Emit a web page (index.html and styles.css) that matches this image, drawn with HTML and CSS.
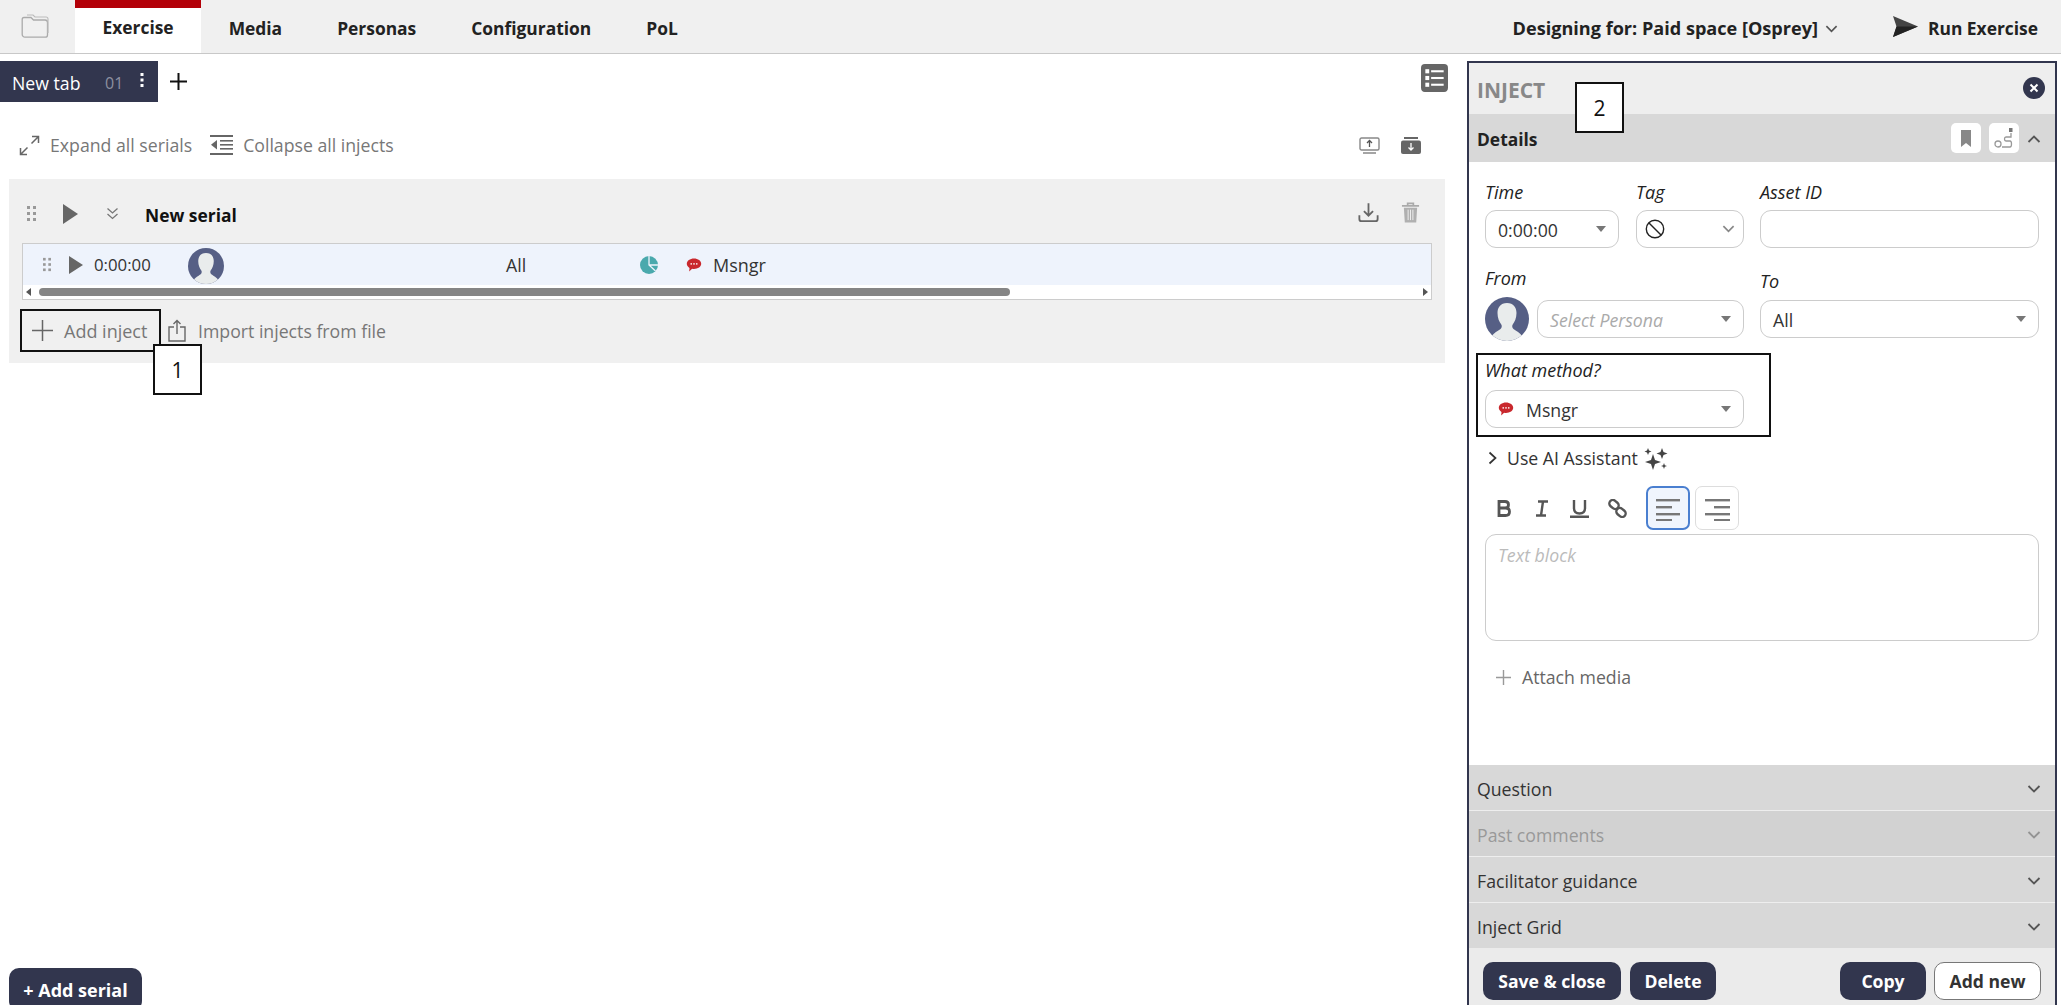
FILE: index.html
```html
<!DOCTYPE html>
<html lang="en">
<head>
<meta charset="utf-8">
<title>Exercise designer</title>
<link rel="stylesheet" href="styles.css">
</head>
<body>
<svg class="defs" width="0" height="0" aria-hidden="true">
  <symbol id="avatar" viewBox="0 0 44 44">
    <clipPath id="avc"><circle cx="22" cy="22" r="22"/></clipPath>
    <g clip-path="url(#avc)">
      <rect width="44" height="44" fill="#565f85"/>
      <path d="M22 6c-6.500 0-9.500 4.500-9.500 10 0 5 1.800 9 3.800 11.500.8 1.200.6 3.500-.8 4.600C12 35 6 36.500 6 44h32c0-7.500-6-9-9.500-11.900-1.400-1.100-1.600-3.400-.8-4.600 2-2.500 3.800-6.500 3.800-11.500C31.500 10.500 28.500 6 22 6z" fill="#e9ecec"/>
    </g>
  </symbol>
  <symbol id="msg" viewBox="0 0 16 16">
    <path d="M8 1.500c4 0 7.200 2.300 7.200 5.300S12 12 8 12c-.7 0-1.300 0-1.900-.2L3.200 14.500l.3-3.500C1.800 10 .8 8.500.8 6.800.8 3.800 4 1.500 8 1.500z" fill="#c9282d"/>
    <circle cx="5.200" cy="6.900" r=".8" fill="#fff"/><circle cx="8" cy="6.900" r=".8" fill="#fff"/><circle cx="10.800" cy="6.900" r=".8" fill="#fff"/>
  </symbol>
  <symbol id="dots" viewBox="0 0 11 17">
    <g fill="#999"><rect x="1" y="1" width="3" height="3"/><rect x="7" y="1" width="3" height="3"/><rect x="1" y="7" width="3" height="3"/><rect x="7" y="7" width="3" height="3"/><rect x="1" y="13" width="3" height="3"/><rect x="7" y="13" width="3" height="3"/></g>
  </symbol>
  <symbol id="chev" viewBox="0 0 14 8">
    <path d="M1.500 1l5.500 5.500L12.500 1" fill="none" stroke="#555" stroke-width="1.800"/>
  </symbol>
</svg>

<header class="topbar">
  <div class="folder">
    <svg width="28" height="24" viewBox="0 0 28 24"><path d="M3 3.500h7l2.500 2.500H24c1.500 0 2.500 1 2.500 2.500V21c0 1.200-1 2.200-2.200 2.200H4c-1.500 0-2.800-1.200-2.800-2.800V5.500C1.200 4.400 2 3.500 3 3.500z" fill="none" stroke="#aaa" stroke-width="1.300"/><path d="M6 1h6l2 2h11c1 0 2 .8 2 2v14" fill="none" stroke="#bbb" stroke-width="1.100"/></svg>
  </div>
  <nav class="nav">
    <a class="nav-item active">Exercise</a>
    <a class="nav-item">Media</a>
    <a class="nav-item">Personas</a>
    <a class="nav-item">Configuration</a>
    <a class="nav-item">PoL</a>
  </nav>
  <div class="top-right">
    <span class="designing">Designing for: Paid space [Osprey]</span>
    <svg class="designing-chev" width="13" height="8"><use href="#chev"/></svg>
    <svg class="send" width="25" height="21" viewBox="0 0 25 21"><path d="M0 0l25 10.500L0 21l3.500-10.500z" fill="#444"/><path d="M3.500 10.500L25 10.500 0 21z" fill="#222"/></svg>
    <span class="run">Run Exercise</span>
  </div>
</header>

<main class="main">
  <section class="left">
    <div class="tabbar">
      <div class="tab">
        <span class="tab-name">New tab</span>
        <span class="tab-num">01</span>
        <svg class="tab-kebab" width="4" height="16" viewBox="0 0 4 16"><g fill="#fff"><rect x="0.500" y="1" width="3" height="3"/><rect x="0.500" y="6.500" width="3" height="3"/><rect x="0.500" y="12" width="3" height="3"/></g></svg>
      </div>
      <svg class="tab-plus" width="17" height="17" viewBox="0 0 17 17"><path d="M8.500 0v17M0 8.500h17" stroke="#111" stroke-width="2"/></svg>
      <svg class="list-icon" width="27" height="28" viewBox="0 0 28 27" preserveAspectRatio="none"><rect width="28" height="27" rx="4" fill="#666"/><g fill="#fff"><rect x="4.500" y="5" width="4" height="4"/><rect x="4.500" y="11.500" width="4" height="4"/><rect x="4.500" y="18" width="4" height="4"/><rect x="10.500" y="6" width="13" height="2"/><rect x="10.500" y="12.500" width="13" height="2"/><rect x="10.500" y="19" width="13" height="2"/></g></svg>
    </div>

    <div class="tools">
      <span class="tool">
        <svg width="21" height="21" viewBox="0 0 21 21"><path d="M13 1.500h6.500V8M19.500 1.500L12.500 8.500M8 19.500H1.500V13M1.500 19.500l7-7" fill="none" stroke="#666" stroke-width="1.500"/></svg>
        <span>Expand all serials</span>
      </span>
      <span class="tool">
        <svg width="23" height="20" viewBox="0 0 23 20"><g fill="#666"><rect y="0" width="23" height="2"/><rect x="10" y="5" width="13" height="1.600"/><rect x="10" y="9" width="13" height="1.600"/><rect x="10" y="13" width="13" height="1.600"/><rect y="18" width="23" height="2"/><path d="M7 5v9.500L1 9.800z"/></g></svg>
        <span>Collapse all injects</span>
      </span>
      <span class="tools-right">
        <svg width="21" height="17" viewBox="0 0 21 17"><path d="M2.500 1h16c.8 0 1.500.7 1.500 1.500v9c0 .8-.7 1.500-1.500 1.500h-16C1.700 13 1 12.300 1 11.500v-9C1 1.700 1.700 1 2.500 1zM4 16h13" fill="none" stroke="#888" stroke-width="1.400"/><path d="M10.500 10V4M8 6l2.500-2.500L13 6" fill="none" stroke="#555" stroke-width="1.300"/></svg>
        <svg width="20" height="17" viewBox="0 0 20 17"><path d="M3 0h14v2H3z" fill="#666"/><rect y="3.500" width="20" height="13.500" rx="2" fill="#666"/><path d="M10 6v7M7.500 10.500L10 13l2.500-2.500" fill="none" stroke="#fff" stroke-width="1.300"/></svg>
      </span>
    </div>

    <div class="card">
      <div class="serial-head">
        <svg class="serial-dots" width="11" height="17"><use href="#dots"/></svg>
        <span class="tri tri-lg"></span>
        <svg class="dbl" width="13" height="13" viewBox="0 0 13 13"><path d="M1.500 1.500l5 4.500 5-4.500M1.500 7l5 4.500 5-4.500" fill="none" stroke="#777" stroke-width="1.300"/></svg>
        <b class="serial-name">New serial</b>
        <span class="serial-icons">
          <svg width="21" height="21" viewBox="0 0 23 22"><path d="M11.500 1v13M6.500 9.500l5 5 5-5M1.500 14v4c0 1.500 1 2.500 2.500 2.500h15c1.500 0 2.500-1 2.500-2.500v-4" fill="none" stroke="#666" stroke-width="2"/></svg>
          <svg width="19" height="21" viewBox="0 0 20 22"><path d="M1 4h18M7 4V1.500h6V4" fill="none" stroke="#aaa" stroke-width="1.800"/><path d="M3 6h14l-1 15.500H4z" fill="#b0b0b0"/><path d="M7.500 8v11M10 8v11M12.500 8v11" stroke="#f0f0f0" stroke-width="1"/></svg>
        </span>
      </div>

      <div class="inject-table">
        <div class="inject-row">
          <svg class="row-dots" width="10" height="15"><use href="#dots"/></svg>
          <span class="tri tri-sm"></span>
          <span class="cell-time">0:00:00</span>
          <svg class="cell-avatar" width="36" height="36"><use href="#avatar"/></svg>
          <span class="cell-to">All</span>
          <svg class="cell-pie" width="18" height="18" viewBox="0 0 18 18"><circle cx="9" cy="9" r="9" fill="#4aa9ad"/><path d="M9 0v9l6.500 6M9 9h9" fill="none" stroke="#eef3fc" stroke-width="1.300"/></svg>
          <svg class="cell-msg" width="16" height="16"><use href="#msg"/></svg>
          <span class="cell-method">Msngr</span>
        </div>
        <div class="scrollbar">
          <span class="arrow-left"></span>
          <span class="thumb"></span>
          <span class="arrow-right"></span>
        </div>
      </div>

      <div class="card-actions">
        <span class="add-inject">
          <svg width="21" height="21" viewBox="0 0 21 21"><path d="M10.500 0v21M0 10.500h21" stroke="#666" stroke-width="1.500"/></svg>
          <span>Add inject</span>
        </span>
        <span class="import">
          <svg width="18" height="23" viewBox="0 0 18 23"><path d="M6 8H1v14h16V8h-5M9 15V1.500M5.500 5L9 1.500 12.500 5" fill="none" stroke="#666" stroke-width="1.400"/></svg>
          <span>Import injects from file</span>
        </span>
      </div>
      <div class="callout callout-one">1</div>
    </div>

    <button class="add-serial">+ Add serial</button>
  </section>

  <aside class="panel">
    <div class="panel-head">
      <span class="panel-title">INJECT</span>
      <svg class="panel-close" width="22" height="22" viewBox="0 0 22 22"><circle cx="11" cy="11" r="11" fill="#32364e"/><path d="M7.500 7.500l7 7M14.500 7.500l-7 7" stroke="#fff" stroke-width="2"/></svg>
      <div class="callout callout-two">2</div>
    </div>
    <div class="section-head details">
      <b>Details</b>
      <span class="details-icons">
        <span class="white-btn">
          <svg width="12" height="17" viewBox="0 0 12 17"><path d="M1 0h10v17l-5-4-5 4z" fill="#888"/></svg>
        </span>
        <span class="white-btn">
          <svg width="21" height="22" viewBox="0 0 21 22"><circle cx="4" cy="17" r="3" fill="none" stroke="#999" stroke-width="1.300"/><rect x="15" y="1" width="3.500" height="4" fill="#777"/><path d="M17 6v4h-5c-2 0-2 4 0 4h4c2 0 2 6 0 6H8" fill="none" stroke="#999" stroke-width="1.300"/></svg>
        </span>
      </span>
      <svg class="chev-up" width="14" height="8"><use href="#chev"/></svg>
    </div>

    <div class="panel-body">
      <div class="row row-one">
        <div class="field field-time">
          <label class="lbl">Time</label>
          <div class="ctl"><span>0:00:00</span><i class="caret"></i></div>
        </div>
        <div class="field field-tag">
          <label class="lbl">Tag</label>
          <div class="ctl">
            <svg width="20" height="20" viewBox="0 0 20 20"><circle cx="10" cy="10" r="8.700" fill="none" stroke="#222" stroke-width="1.400"/><path d="M4 4l12 12" stroke="#222" stroke-width="1.400"/></svg>
            <svg class="ctl-chev" width="13" height="8"><use href="#chev"/></svg>
          </div>
        </div>
        <div class="field field-asset">
          <label class="lbl">Asset ID</label>
          <div class="ctl"></div>
        </div>
      </div>

      <div class="row row-two">
        <div class="field field-from">
          <label class="lbl">From</label>
          <div class="from-line">
            <svg width="44" height="44"><use href="#avatar"/></svg>
            <div class="ctl ctl-grow"><em>Select Persona</em><i class="caret"></i></div>
          </div>
        </div>
        <div class="field field-to">
          <label class="lbl">To</label>
          <div class="ctl"><span>All</span><i class="caret"></i></div>
        </div>
      </div>

      <div class="method">
        <label class="lbl">What method?</label>
        <div class="ctl ctl-method">
          <svg width="16" height="16"><use href="#msg"/></svg>
          <span>Msngr</span>
          <i class="caret"></i>
        </div>
      </div>

      <div class="ai">
        <svg width="9" height="14" viewBox="0 0 9 14"><path d="M1.500 1.500l6 5.500-6 5.500" fill="none" stroke="#333" stroke-width="1.700"/></svg>
        <span>Use AI Assistant</span>
        <svg width="24" height="23" viewBox="0 0 24 23"><g fill="#444"><path d="M9 7l2 6 6 2-6 2-2 6-2-6-6-2 6-2z"/><path d="M18 1l1.500 4 4 1.500-4 1.500L18 12l-1.500-4-4-1.500 4-1.500z"/><path d="M4 1l1 2.500L7.500 4.500 5 5.500 4 8 3 5.500.5 4.500 3 3.500z"/><path d="M20 16l.8 2.200L23 19l-2.200.8L20 22l-.8-2.200L17 19l2.200-.8z"/></g></svg>
      </div>

      <div class="rte">
        <svg class="rte-b" width="14" height="17" viewBox="0 0 14 17"><path d="M2 1.500h6c2.200 0 3.500 1.200 3.500 3.200S10.200 8 8 8H2zM2 8h6.500c2.500 0 4 1.300 4 3.700S11 15.500 8.500 15.500H2z" fill="none" stroke="#555" stroke-width="2.800"/></svg>
        <svg class="rte-i" width="14" height="17" viewBox="0 0 14 17"><path d="M3 1.500h10M1 15.500h10M8 1.500L6 15.500" fill="none" stroke="#555" stroke-width="2.400"/></svg>
        <svg class="rte-u" width="19" height="19" viewBox="0 0 19 19"><path d="M4 1v8c0 3.500 2 5.500 5.500 5.500S15 12.500 15 9V1" fill="none" stroke="#555" stroke-width="2.400"/><path d="M0 17.800h19" stroke="#555" stroke-width="2.600"/></svg>
        <svg class="rte-l" width="19" height="19" viewBox="0 0 19 19"><g fill="none" stroke="#555" stroke-width="2.400"><rect x="1" y="2" width="10" height="7" rx="3.500" transform="rotate(40 6 5.500)"/><rect x="8" y="10" width="10" height="7" rx="3.500" transform="rotate(40 13 13.500)"/></g></svg>
        <span class="align-btn active">
          <svg width="25" height="25" viewBox="0 0 25 25"><g fill="#777"><rect y="3" width="24" height="2.400"/><rect y="10" width="16" height="2.400"/><rect y="17" width="24" height="2.400"/><rect y="23" width="16" height="2"/></g></svg>
        </span>
        <span class="align-btn">
          <svg width="25" height="25" viewBox="0 0 25 25"><g fill="#777"><rect y="3" width="25" height="2.400"/><rect x="9" y="10" width="16" height="2.400"/><rect y="17" width="25" height="2.400"/><rect x="9" y="23" width="16" height="2"/></g></svg>
        </span>
      </div>

      <div class="textblock"><em>Text block</em></div>

      <div class="attach">
        <svg width="15" height="15" viewBox="0 0 15 15"><path d="M7.500 0v15M0 7.500h15" stroke="#999" stroke-width="1.400"/></svg>
        <span>Attach media</span>
      </div>
    </div>

    <div class="accordion">
      <div class="section-head"><span>Question</span><svg width="14" height="8"><use href="#chev"/></svg></div>
      <div class="section-head muted"><span>Past comments</span><svg width="14" height="8"><use href="#chev"/></svg></div>
      <div class="section-head"><span>Facilitator guidance</span><svg width="14" height="8"><use href="#chev"/></svg></div>
      <div class="section-head"><span>Inject Grid</span><svg width="14" height="8"><use href="#chev"/></svg></div>
    </div>

    <div class="panel-foot">
      <button class="btn btn-save">Save &amp; close</button>
      <button class="btn btn-delete">Delete</button>
      <button class="btn btn-copy">Copy</button>
      <button class="btn btn-new">Add new</button>
    </div>
  </aside>
</main>
</body>
</html>
```

FILE: styles.css
```css
* { box-sizing: border-box; }
html, body { height: 100%; }
body {
  margin: 0;
  height: 100vh;
  overflow: hidden;
  display: flex;
  flex-direction: column;
  font-family: "Open Sans", "Noto Sans", sans-serif;
  font-size: 17.7px;
  color: #333;
  background: #fff;
}
svg { display: block; flex: none; }
.defs { position: absolute; }

/* top bar */
.topbar {
  height: 54px;
  flex: none;
  display: flex;
  align-items: stretch;
  background: #f0f0f0;
  border-bottom: 1px solid #c8c8c8;
}
.folder { width: 75px; padding: 14px 0 0 21px; }
.nav { display: flex; }
.nav-item {
  display: flex;
  align-items: center;
  padding: 2px 27.5px 0;
  font-weight: 700;
  font-size: 17.4px;
  color: #222;
}
.nav-item.active {
  background: #fff;
  border-top: 8px solid #b30008;
  padding: 0 27.5px 8px;
}
.top-right {
  margin-left: auto;
  padding: 2px 23px 0 0;
  display: flex;
  align-items: center;
  font-weight: 700;
  font-size: 17.4px;
  color: #222;
}
.designing { font-size: 18.1px; }
.designing-chev { margin: 2px 0 0 7px; }
.send { margin: -2px 10px 0 55px; }

/* main */
.main { flex: 1; min-height: 0; display: flex; }
.left { flex: 1; min-width: 0; display: flex; flex-direction: column; position: relative; }

.tabbar { margin-top: 7px; height: 41px; flex: none; display: flex; }
.tab {
  width: 158px;
  background: #32364e;
  color: #fff;
  display: flex;
  align-items: center;
  padding: 3px 14px 0 12px;
}
.tab-name { width: 93px; }
.tab-num { color: #8d90a0; width: 35px; font-size: 16px; }
.tab-kebab { margin-top: -6px; }
.tab-plus { margin: 12px 0 0 12px; }
.list-icon { margin: 3px 19px 0 auto; }

.tools {
  flex: none;
  padding: 32px 0 23px 19px;
  display: flex;
  align-items: center;
  height: 77px;
  color: #777;
}
.tool { display: flex; align-items: center; gap: 10px; margin-right: 18px; }
.tools-right { margin-left: auto; margin-right: 46px; display: flex; gap: 21px; }

.card {
  position: relative;
  flex: none;
  margin: 0 22px 0 9px;
  background: #f0f0f0;
  padding: 0 13px 11px;
}
.serial-head { height: 64px; display: flex; align-items: center; padding: 5px 0 0 4px; }
.tri { display: block; width: 0; height: 0; border-style: solid; border-color: transparent transparent transparent #666; }
.tri-lg { border-width: 10px 0 10px 15px; margin-left: 26px; }
.tri-sm { border-width: 9px 0 9px 14px; margin-left: 17px; }
.dbl { margin-left: 28px; }
.serial-name { margin-left: 26px; padding-top: 2px; font-weight: 700; font-size: 17.4px; color: #111; }
.serial-icons { margin-left: auto; display: flex; gap: 22px; margin-right: 12px; margin-top: -3px; }

.inject-table { height: 57px; border: 1px solid #ccc; background: #fff; display: flex; flex-direction: column; }
.inject-row { height: 41px; background: #eef3fc; display: flex; align-items: center; padding-left: 19px; }
.cell-time { margin-left: 11px; width: 94px; font-size: 16.8px; }
.cell-avatar { margin-top: 2px; }
.cell-to { margin-left: 282px; width: 134px; }
.cell-msg { margin-left: 28px; }
.cell-method { margin-left: 11px; font-size: 18px; }
.scrollbar { flex: 1; display: flex; align-items: center; padding: 0 3px; }
.thumb { margin-left: 8px; width: 971px; height: 8px; border-radius: 4px; background: #858585; }
.arrow-left { border-style: solid; border-width: 4px 5px 4px 0; border-color: transparent #555 transparent transparent; }
.arrow-right { margin-left: auto; border-style: solid; border-width: 4px 0 4px 5px; border-color: transparent transparent transparent #555; }

.card-actions { margin: 9px 0 0 -2px; display: flex; align-items: center; color: #777; }
.add-inject { width: 141px; height: 43px; border: 2px solid #111; display: flex; align-items: center; gap: 11px; padding-left: 10px; font-size: 18px; }
.import { margin-left: 7px; display: flex; align-items: center; gap: 12px; }

.callout {
  position: absolute;
  background: #fff;
  border: 2px solid #111;
  width: 49px;
  height: 51px;
  display: flex;
  align-items: center;
  justify-content: center;
  font-size: 21px;
  color: #111;
}
.callout-one { left: 144px; top: 165px; }
.callout-two { left: 106px; top: 19px; }

.add-serial {
  margin: auto 0 -6px 9px;
  width: 133px;
  height: 43px;
  flex: none;
  border: 0;
  border-radius: 10px;
  background: #32364e;
  color: #fff;
  font: 700 18px "Open Sans", sans-serif;
  padding: 1px 0 0;
}

/* panel */
.panel {
  width: 590px;
  flex: none;
  margin: 7px 4px 0 0;
  border: 2px solid #32364e;
  border-bottom: 0;
  display: flex;
  flex-direction: column;
}
.panel-head {
  position: relative;
  height: 51px;
  flex: none;
  background: #eee;
  display: flex;
  align-items: center;
  justify-content: space-between;
  padding: 2px 10px 0 8px;
}
.panel-title { font-weight: 700; font-size: 21px; color: #888; }
.panel-close { margin-top: -3px; }

.section-head {
  height: 45px;
  display: flex;
  align-items: center;
  justify-content: space-between;
  padding: 3px 14px 0 8px;
  background: #d8d8d8;
  color: #333;
  flex: none;
}
.section-head.details { height: 48px; padding: 2px 14px 0 8px; }
.section-head.details b { font-weight: 700; font-size: 17.4px; color: #222; }
.details-icons { margin: -2px 0 0 auto; display: flex; gap: 8px; }
.white-btn { width: 30px; height: 30px; background: #fff; border-radius: 5px; display: flex; align-items: center; justify-content: center; }
.chev-up { margin-left: 8px; transform: rotate(180deg); }

.panel-body { flex: 1; min-height: 0; padding: 19px 16px 0 16px; background: #fff; }
.row { display: flex; }
.field { display: flex; flex-direction: column; }
.lbl { display: block; height: 22px; line-height: 22px; font-style: italic; color: #222; font-size: 18px; }
.ctl {
  height: 38px;
  margin-top: 7px;
  border: 1px solid #ccc;
  border-radius: 11px;
  display: flex;
  align-items: center;
  justify-content: space-between;
  padding: 0 12px;
  background: #fff;
}
.ctl span, .ctl em { padding-top: 2px; }
.caret { width: 0; height: 0; border-style: solid; border-width: 6px 5px 0; border-color: #777 transparent transparent; }
.ctl-chev { opacity: .7; }
.field-time { width: 134px; }
.field-tag { width: 108px; margin-left: 17px; }
.field-asset { flex: 1; margin-left: 16px; }
.field-tag .ctl { padding: 0 8px 0 8px; }

.row-two { padding-top: 19px; }
.field-from { width: 259px; }
.from-line { display: flex; align-items: center; margin-top: 8px; gap: 8px; }
.ctl-grow { flex: 1; margin-top: 0; }
.ctl-grow em { color: #aaa; }
.field-to { flex: 1; margin-left: 16px; padding-top: 3px; }
.field-to .ctl { margin-top: 8px; }

.method {
  margin: 12px 0 0 -9px;
  width: 295px;
  height: 84px;
  border: 2px solid #111;
  padding: 4px 0 0 7px;
}
.ctl-method { width: 259px; margin-top: 9px; justify-content: flex-start; gap: 12px; }
.ctl-method .caret { margin-left: auto; }

.ai { margin-top: 10px; height: 22px; display: flex; align-items: center; padding-left: 3px; }
.ai span { margin: 0 6px 0 10px; }

.rte { margin-top: 17px; height: 44px; display: flex; align-items: center; }
.rte-b { margin-left: 12px; }
.rte-i { margin-left: 24px; }
.rte-u { margin-left: 21px; }
.rte-l { margin-left: 19px; }
.align-btn { width: 44px; height: 44px; margin-left: 5px; border: 1px solid #ddd; border-radius: 7px; display: flex; align-items: center; justify-content: center; }
.rte-l + .align-btn { margin-left: 19px; }
.align-btn.active { border: 2px solid #4a7fd0; background: #f0f5fd; }

.textblock { margin-top: 4px; height: 107px; border: 1px solid #ccc; border-radius: 11px; padding: 8px 12px; }
.textblock em { color: #bbb; }
.attach { margin-top: 25px; height: 22px; display: flex; align-items: center; gap: 11px; padding-left: 11px; color: #666; }

.accordion { flex: none; display: flex; flex-direction: column; gap: 1px; background: #eee; }
.section-head.muted { background: #d2d2d2; color: #999; }
.section-head.muted svg { opacity: .5; }

.panel-foot {
  flex: none;
  height: 57px;
  background: #ebebeb;
  display: flex;
  align-items: flex-start;
  padding: 14px 14px 0 14px;
  gap: 8px;
}
.btn {
  height: 38px;
  border-radius: 10px;
  border: 0;
  background: #32364e;
  color: #fff;
  font: 700 17.6px "Open Sans", sans-serif;
  padding: 0;
}
.btn-save { width: 138px; }
.btn-delete { width: 86px; margin-left: 1px; }
.btn-copy { width: 86px; margin-left: auto; }
.btn-new { width: 107px; background: #fff; color: #333; border: 1px solid #777; }
```
